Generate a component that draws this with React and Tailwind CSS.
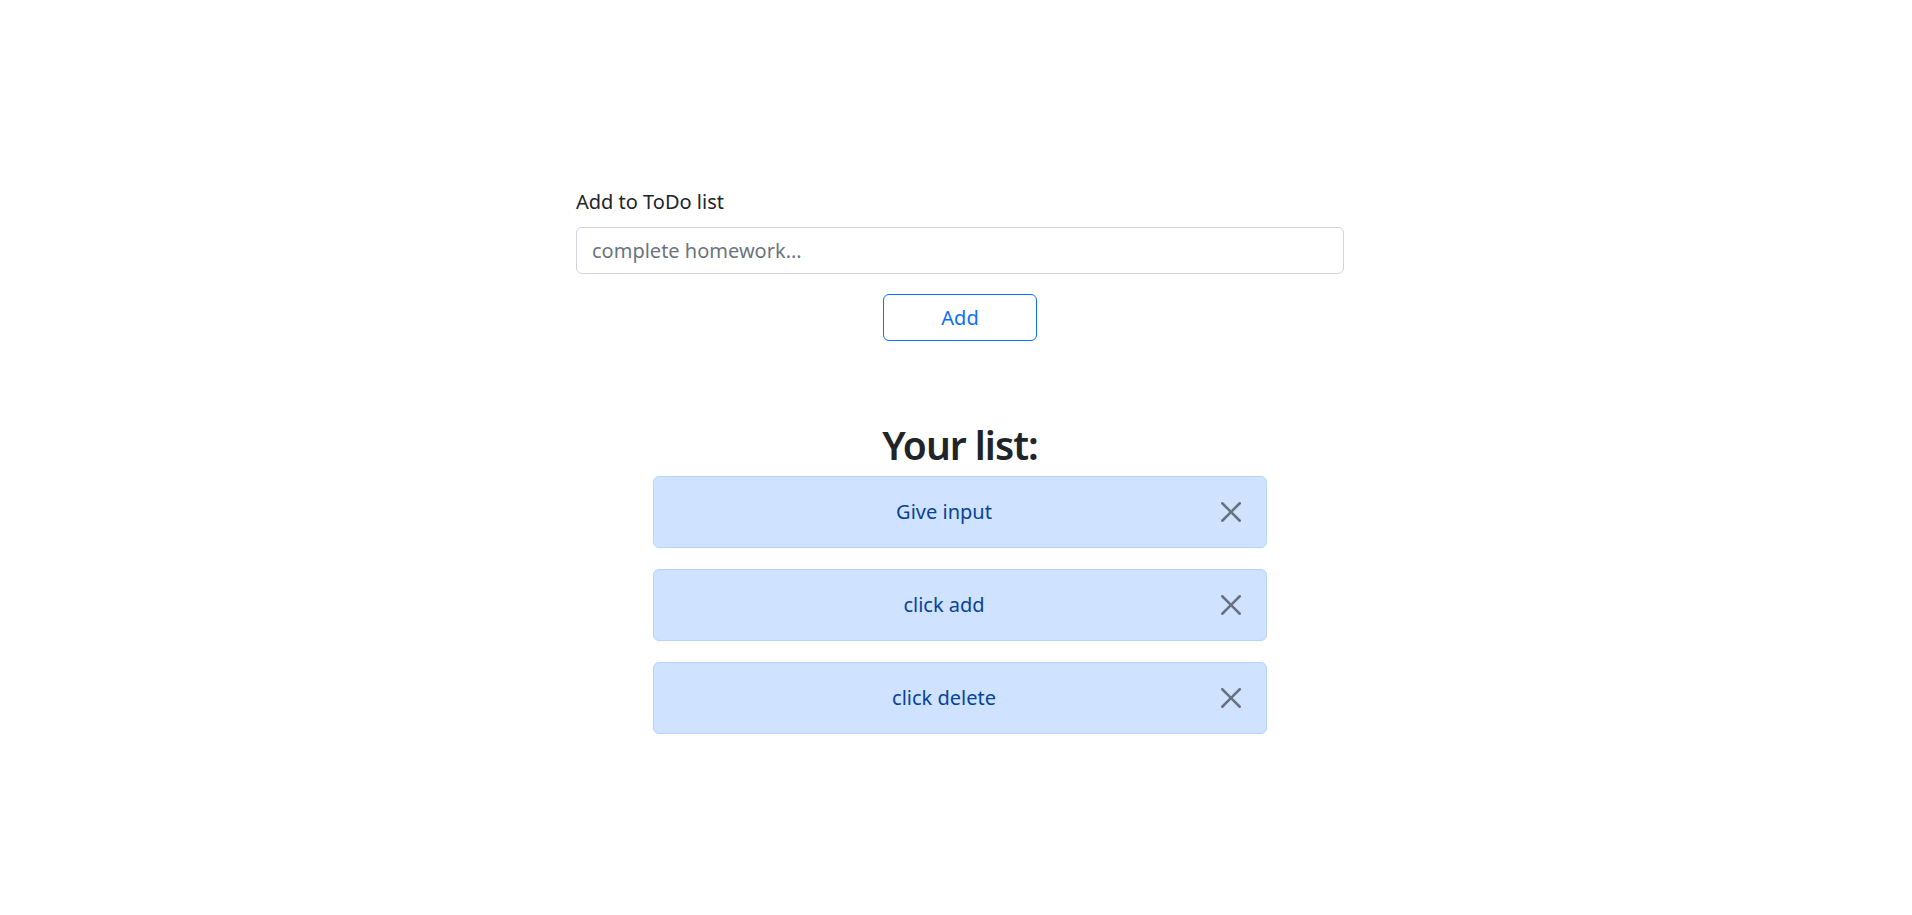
import React, { useState } from 'react';

const CloseIcon = () => (
    <svg viewBox="0 0 16 16" className="w-5 h-5" fill="#000" fillOpacity="0.5">
        <path d="M.293.293a1 1 0 0 1 1.414 0L8 6.586 14.293.293a1 1 0 1 1 1.414 1.414L9.414 8l6.293 6.293a1 1 0 0 1-1.414 1.414L8 9.414l-6.293 6.293a1 1 0 0 1-1.414-1.414L6.586 8 .293 1.707a1 1 0 0 1 0-1.414z" />
    </svg>
);

const TodoItem = ({ text, onDelete }) => (
    <div className="flex items-center h-[72px] mb-[21px] pl-7 bg-[#cfe2ff] border border-[#b6d4fe] rounded-[6px] text-[#084298]">
        <span className="flex-1 text-center text-[20px] leading-[30px]">{text}</span>
        <button onClick={onDelete} className="ml-[15px] mr-[25px] flex items-center justify-center">
            <CloseIcon />
        </button>
    </div>
);

const App = () => {
    const [items, setItems] = useState(['Give input', 'click add', 'click delete']);
    const [value, setValue] = useState('');

    const addItem = () => {
        if (!value.trim()) return;
        setItems([...items, value]);
        setValue('');
    };

    return (
        <div className="bg-white text-[#212529] font-['Segoe_UI','Noto_Sans',sans-serif]">
            <div className="pt-[187px] pl-[8px] flex flex-col items-center">
                <div className="w-[768px]">
                    <label className="block text-[20px] leading-[30px] mb-[10px]">Add to ToDo list</label>
                    <input
                        value={value}
                        onChange={(e) => setValue(e.target.value)}
                        placeholder="complete homework..."
                        className="block w-full h-[47px] px-[15px] text-[20px] border border-[#ced4da] rounded-[6px] placeholder:text-[#6c757d] outline-none"
                    />
                </div>
                <button
                    onClick={addItem}
                    className="mt-5 w-[154px] h-[47px] border border-[#0d6efd] rounded-[6px] text-[#0d6efd] text-[20px]"
                >
                    Add
                </button>
                <h2 className="mt-[80px] mb-[7px] text-[39px] leading-[48px] font-semibold tracking-[-1px]">Your list:</h2>
                <div className="w-[614px]">
                    {items.map((item, i) => (
                        <TodoItem key={i} text={item} onDelete={() => setItems(items.filter((_, j) => j !== i))} />
                    ))}
                </div>
            </div>
        </div>
    );
};

export default App;
